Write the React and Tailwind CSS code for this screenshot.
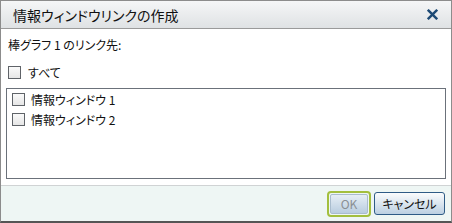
import React from 'react';

const FONT = { fontFamily: '"Noto Sans CJK JP", "Liberation Sans", sans-serif' };

function Box() {
  return (
    <span className="w-[13px] h-[13px] border border-[#5f6368] bg-gradient-to-b from-[#fafafa] to-[#e6e6e6] shrink-0" />
  );
}

export default function App() {
  return (
    <div className="w-[452px] h-[223px] flex flex-col bg-white border border-[#8c8c8c] border-b-2 border-b-[#555] text-[#111] [font-feature-settings:'palt']" style={FONT}>
      {/* Title bar */}
      <div className="h-[28px] flex items-center justify-between pl-[12px] pr-[13px] bg-gradient-to-b from-[#f5f6f7] to-[#dfe2e4] border-b border-[#9a9a9a]">
        <span className="text-[14px] leading-none">情報ウィンドウリンクの作成</span>
        <svg width="11" height="11" viewBox="0 0 10 10">
          <path d="M1.5 1.5 L8.5 8.5 M8.5 1.5 L1.5 8.5" stroke="#1d4a75" strokeWidth="2.2" strokeLinecap="square" />
        </svg>
      </div>

      {/* Body */}
      <div className="flex-1 flex flex-col px-[5px] pt-[8px] pb-[4px] text-[12px]">
        <div className="pl-[2px] leading-[16px]">棒グラフ 1 のリンク先:</div>
        <div className="flex items-center gap-[7px] pl-[2px] mt-[13px]">
          <Box />
          <span className="leading-none">すべて</span>
        </div>
        <div className="mt-[9px] h-[91px] w-[440px] border border-[#6b717a] flex flex-col gap-[7px] pt-[4px] pl-[5px]">
          <div className="flex items-center gap-[6px]">
            <Box />
            <span className="leading-none">情報ウィンドウ 1</span>
          </div>
          <div className="flex items-center gap-[6px]">
            <Box />
            <span className="leading-none">情報ウィンドウ 2</span>
          </div>
        </div>
      </div>

      {/* Footer */}
      <div className="h-[36px] bg-[#eef6f4] border-t border-[#d0d3d4] flex items-center justify-end gap-[3px] pr-[6px] text-[12px]">
        <div className="rounded-[4px] border-[2px] border-[#a3bf3e] p-[1px]">
          <button className="w-[38px] h-[20px] rounded-[2px] bg-gradient-to-b from-[#e6eef5] to-[#b9cddf] text-[#8a8f94] border border-[#a9bccd] leading-none">OK</button>
        </div>
        <button className="w-[71px] h-[23px] rounded-[3px] bg-gradient-to-b from-[#fbfcfd] to-[#bcd0e2] border border-[#2e5b86] text-[#111] leading-none">キャンセル</button>
      </div>
    </div>
  );
}
